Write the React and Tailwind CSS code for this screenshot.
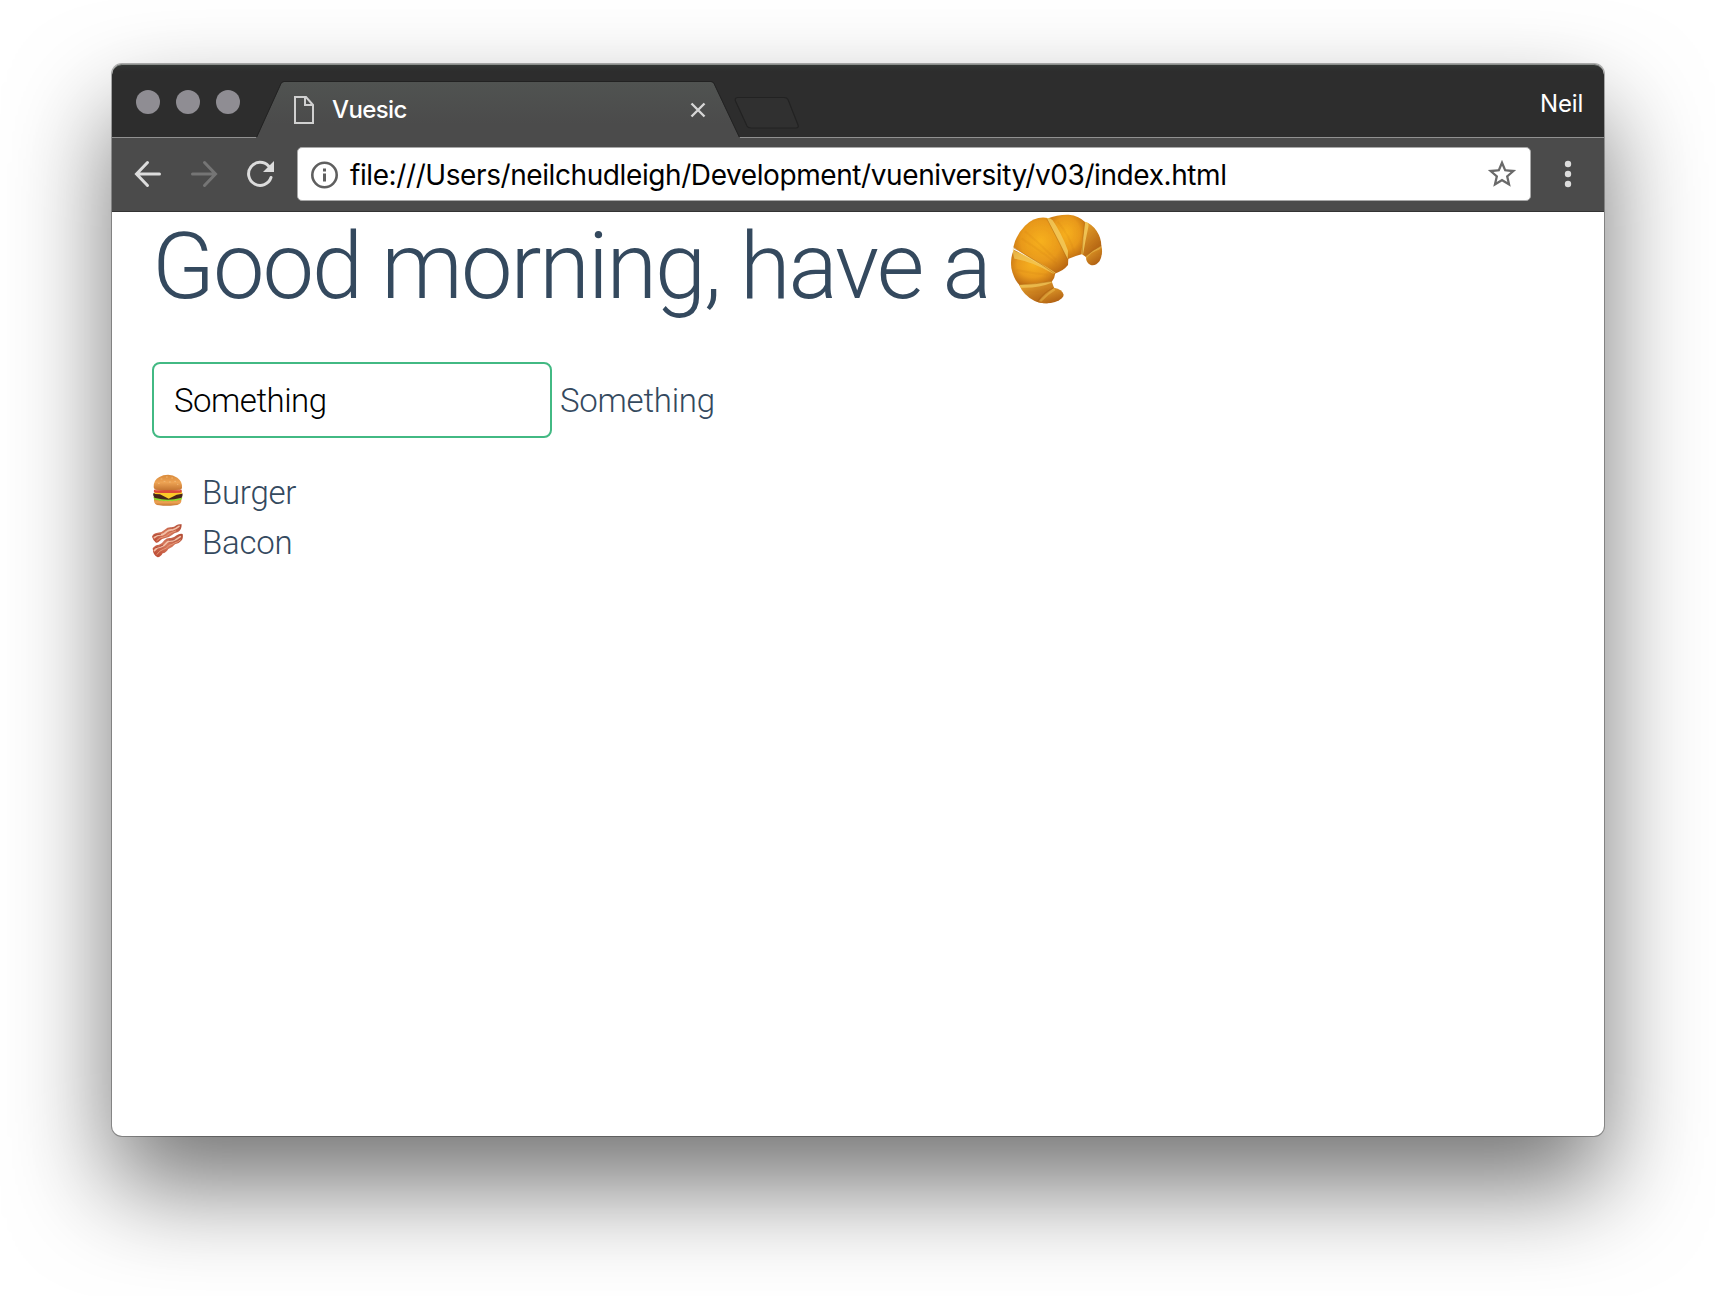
import { useState } from "react";

const foods = [
  { name: "Burger", Icon: Burger },
  { name: "Bacon", Icon: Bacon },
];

export default function App() {
  return (
    <div className="h-[1296px] w-[1716px] overflow-hidden bg-white px-[112px] pt-16">
      <div className="flex h-[1072px] flex-col overflow-hidden rounded-[10px] bg-white shadow-[0_0_0_1px_rgba(0,0,0,0.3),0_50px_100px_rgba(0,0,0,0.55)]">
        <TabStrip />
        <Toolbar />
        <Page />
      </div>
    </div>
  );
}

function TabStrip() {
  return (
    <div className="relative flex h-[74px] shrink-0 rounded-t-[10px] border-b border-[#919191] bg-linear-to-b from-[#333735] to-[#2d2d2d] to-10% font-['Inter',sans-serif] text-white shadow-[inset_0_1px_0_#8b8f8c]">
      <div className="flex gap-4 pt-[26px] pl-6">
        <span className="size-6 rounded-full bg-[#8f8d93]" />
        <span className="size-6 rounded-full bg-[#8f8d93]" />
        <span className="size-6 rounded-full bg-[#8f8d93]" />
      </div>

      {/* Active tab */}
      <div className="relative -mb-px ml-4 h-[74px] w-[484px]">
        <svg className="absolute top-[17px] left-0" width="484" height="57" viewBox="0 0 484 57">
          <defs>
            <linearGradient id="tab" x1="0" y1="0" x2="0" y2="1">
              <stop offset="0" stopColor="#505351" />
              <stop offset="0.75" stopColor="#4b4b4b" />
            </linearGradient>
          </defs>
          <path d="M.5 57 25 3q1-2 3-2H455q2 0 3 2L483.500 57Z" fill="url(#tab)" />
          <path d="M.5 56.500 25 2.500q1-2 3-2H455q2 0 3 2L483.500 56.500" fill="none" stroke="#222" strokeWidth="1" />
        </svg>
        <div className="relative flex h-full items-center pt-[18px] pr-[34px] pl-[37px]">
          <svg width="22" height="30" viewBox="0 0 22 30" fill="none" stroke="#d0d0d0" strokeWidth="2">
            <path d="M2 2h11l7 8v18H2z" />
            <path d="M12 2v8h8" />
          </svg>
          <span className="ml-[17px] grow text-[24px] leading-7 font-medium tracking-[-0.6px]">Vuesic</span>
          <svg width="16" height="16" viewBox="0 0 16 16" stroke="#d6d6d6" strokeWidth="2.400">
            <path d="M1.500 1.500l13 13M14.500 1.500l-13 13" />
          </svg>
        </div>
      </div>

      {/* New tab button */}
      <svg className="mt-8 -ml-[7px]" width="68" height="34" viewBox="0 0 68 34">
        <path
          d="M5 1.500H51q3 0 4 2L65 29q1 3-2 3H18q-3 0-4-2L2.500 5q-1-3 2-3.500Z"
          fill="#303030"
          stroke="#222"
          strokeWidth="1.200"
        />
      </svg>

      <span className="mt-[26px] mr-[21px] ml-auto text-[24px] leading-7 tracking-[-0.2px]">Neil</span>
    </div>
  );
}

function Toolbar() {
  return (
    <div className="flex h-[74px] shrink-0 items-start border-b border-[#333] bg-[#4b4b4b] pt-[9px] pl-[22px]">
      <div className="flex h-[54px] items-center gap-[28px]">
        <Arrow className="text-[#dcdcdc]" />
        <Arrow className="rotate-180 text-[#757575]" />
        <svg width="28" height="28" viewBox="0 0 28 28" fill="none" stroke="#dcdcdc" strokeWidth="3">
          <path d="M25 17.500A11.500 11.500 0 1 1 22.500 6" strokeLinecap="round" />
          <path d="M28 1v11H17z" fill="#dcdcdc" stroke="none" />
        </svg>
      </div>

      <div className="ml-[23px] flex h-[54px] w-[1234px] items-center rounded-[5px] border border-[#a8a8a8] bg-white pl-[13px]">
        <svg className="mt-px" width="28" height="28" viewBox="0 0 28 28" fill="none" stroke="#5f5f5f">
          <circle cx="13.500" cy="14" r="12.200" strokeWidth="2.600" />
          <path d="M13.500 12.500v8M13.500 7.500v3" strokeWidth="3" />
        </svg>
        <span className="mt-px ml-[11px] grow font-['Inter',sans-serif] text-[28px] leading-8 tracking-[-0.41px] text-black">
          file:///Users/neilchudleigh/Development/vueniversity/v03/index.html
        </span>
        <svg className="mr-[11px]" width="34" height="34" viewBox="0 0 24 24" fill="#6a6a6a">
          <path d="M22 9.240l-7.190-.62L12 2 9.190 8.630 2 9.240l5.460 4.730L5.820 21 12 17.270 18.180 21l-1.630-7.030L22 9.240zM12 15.400l-3.760 2.270 1-4.280-3.320-2.880 4.380-.38L12 6.100l1.710 4.040 4.380.38-3.320 2.880 1 4.280L12 15.400z" />
        </svg>
      </div>

      <svg className="mt-[13px] ml-[33px]" width="8" height="28" viewBox="0 0 8 28" fill="#dcdcdc">
        <circle cx="4" cy="4" r="3.200" />
        <circle cx="4" cy="14" r="3.200" />
        <circle cx="4" cy="24" r="3.200" />
      </svg>
    </div>
  );
}

function Page() {
  const [message, setMessage] = useState("Something");

  return (
    <div className="flex-1 px-10 font-['Roboto',sans-serif] text-[33px] font-light text-[#34495e]">
      <h1 className="flex h-[150px] items-start text-[92px] leading-[109px] tracking-[-2.05px]">
        <span>Good morning, have a</span>
        <Croissant />
      </h1>

      <div className="flex items-center gap-2">
        <input
          value={message}
          onChange={e => setMessage(e.target.value)}
          className="h-[76px] w-[400px] rounded-[8px] border-2 border-[#42b983] px-5 pt-px tracking-[-0.5px] text-black outline-none"
        />
        <span className="pt-px tracking-[-0.25px]">{message}</span>
      </div>

      <ul className="mt-[29px]">
        {foods.map(({ name, Icon }) => (
          <li key={name} className="flex h-[50px] items-center">
            <Icon />
            <span className="ml-[18px] pt-px tracking-[-0.25px]">{name}</span>
          </li>
        ))}
      </ul>
    </div>
  );
}

/* ---- icons ---- */

function Arrow({ className }) {
  return (
    <svg
      className={className}
      width="28"
      height="28"
      viewBox="0 0 28 28"
      fill="none"
      stroke="currentColor"
      strokeWidth="3"
      strokeLinecap="round"
    >
      <path d="M13.500 2.500 2.500 14l11 11.500M3 14h22.500" />
    </svg>
  );
}

function Croissant() {
  return (
    <svg className="mt-[2px] ml-[21px] shrink-0" width="92" height="90" viewBox="95 43 276 270">
      <defs>
        <radialGradient id="crust" cx="0.5" cy="0.42" r="0.65">
          <stop offset="0" stopColor="#f7b11f" />
          <stop offset="0.55" stopColor="#e99a1c" />
          <stop offset="1" stopColor="#b86612" />
        </radialGradient>
        <linearGradient id="crustEnd" x1="0" y1="0" x2="0.6" y2="1">
          <stop offset="0" stopColor="#edaa30" />
          <stop offset="1" stopColor="#b06012" />
        </linearGradient>
      </defs>
      <path d="M203 57Q235 44 268 45Q300 48 318 68L309 163Q290 168 266 178Z" fill="url(#crust)" />
      <path d="M316 66Q338 72 352 94Q366 115 366 139L320 172L307 163Z" fill="url(#crustEnd)" />
      <path d="M366 138Q372 162 361 184Q349 200 334 196Q319 190 320 169Z" fill="url(#crustEnd)" />
      <path d="M205 55Q168 48 137 78Q110 105 102 143L226 222Q252 214 266 196L267 177Z" fill="url(#crust)" />
      <path d="M104 150Q92 173 96 205Q103 239 121 257L217 247Q227 234 228 220Z" fill="url(#crust)" />
      <path d="M119 255Q132 286 166 304Q180 311 205 311L224 264L217 245Z" fill="url(#crustEnd)" />
      <path d="M176 308Q205 314 227 307Q253 297 253 285Q249 269 224 264Z" fill="url(#crustEnd)" />
      <g fill="#f3cb5c" opacity="0.850">
        <path d="M202 56Q209 52 220 62Q247 102 266 153L265 179Q236 120 202 56Z" />
        <path d="M101 144Q104 155 116 158Q169 179 229 219L222 222Q155 184 105 177Q99 158 101 144Z" opacity="0.850" />
        <path d="M318 66Q330 68 327 82Q318 123 311 165L306 162Q310 111 318 66Z" />
        <path d="M364 139Q367 148 354 152Q334 159 322 176L319 170Q339 151 364 139Z" opacity="0.500" />
        <path d="M120 255Q168 255 216 245L217 249Q177 266 125 264Z" opacity="0.800" />
        <path d="M224 266Q198 280 179 303L186 306Q204 286 228 272Z" opacity="0.450" />
      </g>
      <g fill="none" stroke="#a9610c" strokeWidth="2" opacity="0.650">
        <path d="M203 58Q238 124 265 180" />
        <path d="M103 145Q116 151 133 162Q185 191 226 222" />
        <path d="M309 163Q309 115 316 68" />
        <path d="M119 255Q170 254 217 245M319 171Q337 150 366 139M173 306Q195 275 224 264" />
      </g>
      <g fill="none" stroke="#c8730e" strokeWidth="6" opacity="0.120">
        <path d="M137 95Q182 133 230 180M126 116Q177 148 232 192M235 66Q270 107 285 158M112 211Q158 221 204 225M133 275Q174 282 205 268" />
      </g>
    </svg>
  );
}

function Burger() {
  return (
    <svg className="-mt-[5px] shrink-0" width="32" height="32" viewBox="0 0 96 96">
      <defs>
        <linearGradient id="bun" x1="0" y1="0" x2="0" y2="1">
          <stop offset="0" stopColor="#d98a3a" />
          <stop offset="0.5" stopColor="#eda354" />
          <stop offset="1" stopColor="#c47531" />
        </linearGradient>
      </defs>
      <path d="M6 74q40 10 82 0v8q-2 11-20 12-24 3-46 0Q6 92 6 80Z" fill="url(#bun)" />
      <path d="M4 70q5-4 10 0 33 8 67 0 6-3 10 1-1 7-8 8-5-3-10 2-7-3-12 1-7-3-13 0-7-4-13 0-6-4-12-1-6-4-11-2-7-1-8-9Z" fill="#8ddb2f" />
      <path d="M4 58q43-8 87 0 3 10-5 14-38 11-76 0-8-4-6-14Z" fill="#47251a" />
      <path d="M7 51q41-8 81 0l3 8-17 3-24 12-26-13-16-1Z" fill="#fcc928" />
      <path d="M6 47q42-9 83 0 2 6-2 9-39 2-79 0-4-3-2-9Z" fill="#dc4938" />
      <path d="M10 48q38-4 74 0" fill="none" stroke="#f49a84" strokeWidth="3" />
      <path d="M5 40Q4 18 22 9 33 2 48 2t28 9q15 10 14 30-1 6-11 6-34 3-66 0-8-1-8-7Z" fill="url(#bun)" />
      <g stroke="#f6c688" strokeWidth="2" strokeLinecap="round">
        <path d="M27 15h3M43 9h3M59 12h3M36 22h3M52 24h3M68 22h3M19 28h3M76 31h2" />
      </g>
    </svg>
  );
}

function Bacon() {
  return (
    <svg className="-mt-[2px] shrink-0" width="32" height="34" viewBox="0 0 96 102">
      <defs>
        <linearGradient id="meat" x1="0" y1="1" x2="1" y2="0">
          <stop offset="0" stopColor="#b9452f" />
          <stop offset="0.5" stopColor="#d5775a" />
          <stop offset="1" stopColor="#b04a34" />
        </linearGradient>
      </defs>
      <path d="M0 38q3-10 17-12 12 0 21-9 9-8 20-7 9 0 15-6 7-5 16-3 0 18-11 23-12 3-19 10-10 8-19 8-11 1-17 9-5 6-11 5-8-5-12-18Z" fill="url(#meat)" />
      <path d="M2 73q7-10 19-11 10-3 16-13 8-9 20-7 10-1 17-8 8-6 18-4 3 14-5 21-7 9-18 10-8 10-20 14-7 12-17 13-6 11-15 12-14-5-15-27Z" fill="url(#meat)" />
      <g fill="none" strokeLinecap="round">
        <path d="M7 41q9-8 18-8 10 0 19-10 7-6 17-5 10-3 20-11M7 80q9-11 19-11 10-2 18-13 6-6 17-5 10-2 24-13" stroke="#f3c0a6" strokeWidth="5" />
        <path d="M14 50q10-11 20-11 9-1 17-9 7-5 20-9M15 91q8-12 19-15 11-2 17-12 9-2 17-7 10-3 17-9" stroke="#e69a78" strokeWidth="3" />
        <path d="M8 34q9-3 18-3M12 71q10-2 20-7M51 49q9 0 16-2" stroke="#98382a" strokeWidth="2" />
      </g>
    </svg>
  );
}
